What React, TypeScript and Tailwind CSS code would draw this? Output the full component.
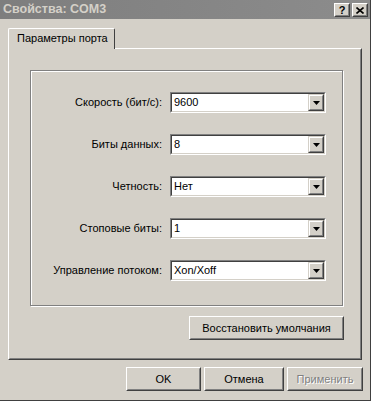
import React from "react";

function Arrow() {
  return (
    <svg width="7" height="4" viewBox="0 0 7 4" className="block">
      <path d="M0 0h7L3.5 4z" fill="#000" />
    </svg>
  );
}

function Combo({ value }: { value: string }) {
  return (
    <div className="w-[156px] h-[21px] border border-t-[#808080] border-l-[#808080] border-r-white border-b-white">
      <div className="h-full border border-t-[#404040] border-l-[#404040] border-r-[#d4d0c8] border-b-[#d4d0c8] bg-white flex items-center">
        <div className="flex-1 pl-[2px] text-[11px] leading-none text-black">{value}</div>
        <div className="w-[16px] h-[17px] border border-t-[#d4d0c8] border-l-[#d4d0c8] border-r-[#404040] border-b-[#404040]">
          <div className="h-full border border-t-white border-l-white border-r-[#808080] border-b-[#808080] bg-[#d4d0c8] flex items-center justify-center">
            <Arrow />
          </div>
        </div>
      </div>
    </div>
  );
}

function Button({
  children,
  width,
  disabled,
}: {
  children: React.ReactNode;
  width: string;
  disabled?: boolean;
}) {
  return (
    <div className={`${width} h-[24px] border border-t-white border-l-white border-r-[#404040] border-b-[#404040]`}>
      <div className="h-full border border-t-[#d4d0c8] border-l-[#d4d0c8] border-r-[#808080] border-b-[#808080] flex items-center justify-center text-[11px] leading-none">
        {disabled ? (
          <span className="text-[#808080] [text-shadow:1px_1px_0_#fff]">{children}</span>
        ) : (
          <span className="text-black">{children}</span>
        )}
      </div>
    </div>
  );
}

function TitleButton({ children }: { children: React.ReactNode }) {
  return (
    <div className="w-[16px] h-[14px] border border-t-white border-l-white border-r-[#404040] border-b-[#404040]">
      <div className="h-full border border-t-[#d4d0c8] border-l-[#d4d0c8] border-r-[#808080] border-b-[#808080] bg-[#d4d0c8] flex items-center justify-center">
        {children}
      </div>
    </div>
  );
}

const rows: [string, string][] = [
  ["Скорость (бит/с):", "9600"],
  ["Биты данных:", "8"],
  ["Четность:", "Нет"],
  ["Стоповые биты:", "1"],
  ["Управление потоком:", "Xon/Xoff"],
];

export default function App() {
  return (
    <div
      className="w-[371px] h-[401px] bg-[#d4d0c8] flex flex-col border-r border-b border-r-[#404040] border-b-[#404040] select-none"
      style={{ fontFamily: '"Liberation Sans", Arial, sans-serif' }}
    >
      {/* Title bar */}
      <div className="h-[19px] bg-gradient-to-r from-[#7e7e7e] to-[#8c8c8c] flex items-center pl-[3px] pr-[2px]">
        <div className="flex-1 text-[12.5px] font-bold text-[#d4d0c8] leading-none">Свойства: COM3</div>
        <div className="flex gap-[2px] mt-[1px]">
          <TitleButton>
            <span className="text-[11px] font-bold leading-none text-black">?</span>
          </TitleButton>
          <TitleButton>
            <svg width="8" height="7" viewBox="0 0 8 7" className="block">
              <path d="M0.5 0.5L7.5 6.5M7.5 0.5L0.5 6.5" stroke="#000" strokeWidth="1.6" />
            </svg>
          </TitleButton>
        </div>
      </div>

      {/* Body */}
      <div className="flex flex-col pl-[8px] pr-[8px] pt-[9px]">
        {/* Tab */}
        <div className="flex">
          <div className="relative z-10 -mb-[1px] w-[107px] h-[21px] bg-[#d4d0c8] border-t border-l border-r border-t-white border-l-white border-r-[#404040] rounded-tl-[2px] rounded-tr-[2px] flex items-center pl-[8px] pb-[1px]">
            <span className="text-[11px] leading-none text-black">Параметры порта</span>
          </div>
        </div>

        {/* Panel */}
        <div className="w-[354px] h-[312px] border border-t-white border-l-white border-r-[#404040] border-b-[#404040]">
          <div className="h-full border border-t-[#d4d0c8] border-l-[#d4d0c8] border-r-[#808080] border-b-[#808080] pt-[20px] pl-[20px] pr-[17px] flex flex-col">
            {/* Group box */}
            <div className="h-[236px] border border-[#808080] shadow-[1px_1px_0_#fff,inset_1px_1px_0_#fff] pt-[21px] flex flex-col gap-[21px]">
              {rows.map(([label, value]) => (
                <div key={label} className="flex items-center">
                  <div className="w-[133px] text-right text-[11px] leading-none text-black pr-[2px]">{label}</div>
                  <div className="ml-[6px]">
                    <Combo value={value} />
                  </div>
                </div>
              ))}
            </div>
            <div className="flex justify-end mt-[10px] -mr-[1px]">
              <Button width="w-[155px]">Восстановить умолчания</Button>
            </div>
          </div>
        </div>

        {/* Bottom buttons */}
        <div className="flex justify-end gap-[3px] mt-[7px] -mr-[1px]">
          <Button width="w-[75px]">OK</Button>
          <Button width="w-[80px]">Отмена</Button>
          <Button width="w-[76px]" disabled>
            Применить
          </Button>
        </div>
      </div>
    </div>
  );
}
